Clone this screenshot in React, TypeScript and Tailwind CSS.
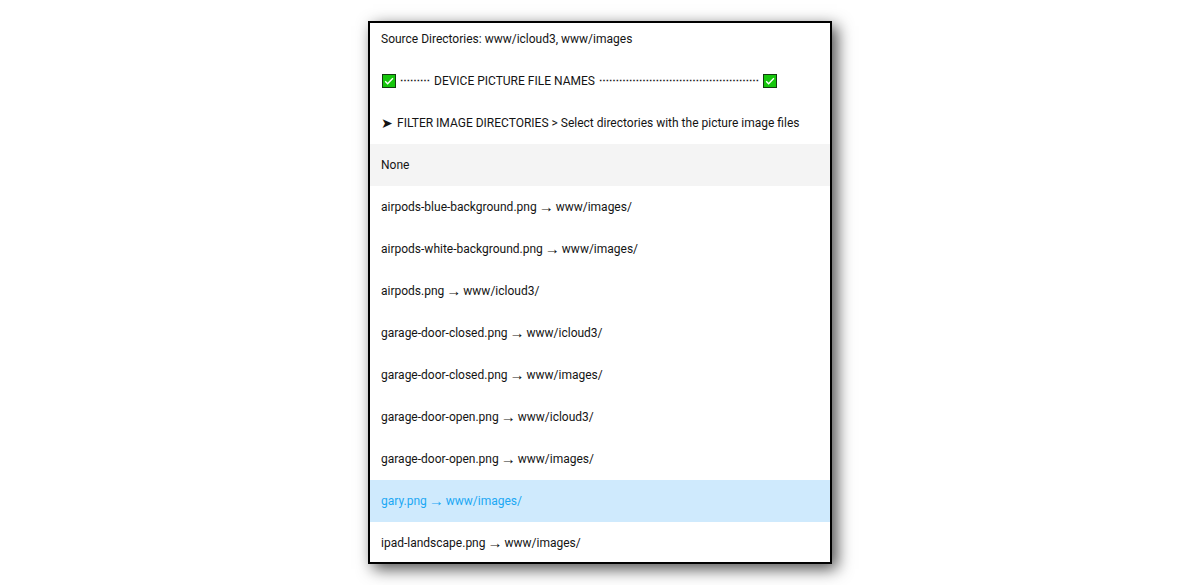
import { useState } from "react";

const files = [
  ["airpods-blue-background.png", "www/images/"],
  ["airpods-white-background.png", "www/images/"],
  ["airpods.png", "www/icloud3/"],
  ["garage-door-closed.png", "www/icloud3/"],
  ["garage-door-closed.png", "www/images/"],
  ["garage-door-open.png", "www/icloud3/"],
  ["garage-door-open.png", "www/images/"],
  ["gary.png", "www/images/"],
  ["ipad-landscape.png", "www/images/"],
];

function CheckIcon() {
  return (
    <svg viewBox="0 0 14 14" className="h-3.5 w-3.5 shrink-0" aria-hidden="true">
      <rect x="0.5" y="0.5" width="13" height="13" fill="#16c60c" stroke="#123d10" />
      <path d="M3.2 7.3 5.6 9.7 10.9 4.2" fill="none" stroke="#fff" strokeWidth="1.4" />
    </svg>
  );
}

function Dots({ count }: { count: number }) {
  return <span className="text-[10px] font-bold">{"⋯".repeat(count)}</span>;
}

const row = "flex w-full items-center px-[11px] text-left whitespace-pre";

export default function App() {
  const [selected, setSelected] = useState(7);
  return (
    <main className="flex min-h-screen items-start justify-center bg-white pt-[21px] font-['Roboto','Liberation_Sans',sans-serif] text-[12px] leading-5 text-[#141414]">
      <div
        role="listbox"
        aria-label="Device picture file names"
        className="w-full max-w-[464px] border-2 border-black bg-white shadow-[5px_5px_15px_rgba(0,0,0,0.7)]"
      >
        <button role="option" aria-selected={false} className={`${row} h-[37px] pb-[5px]`}>
          Source Directories: www/icloud3, www/images
        </button>
        <button role="option" aria-selected={false} className={`${row} h-[42px] gap-1 pl-3`}>
          <CheckIcon />
          <Dots count={3} />
          <span>DEVICE PICTURE FILE NAMES</span>
          <Dots count={16} />
          <CheckIcon />
        </button>
        <button role="option" aria-selected={false} className={`${row} h-[42px] gap-1`}>
          <span className="text-[14px]">➤</span>
          <span>FILTER IMAGE DIRECTORIES &gt; Select directories with the picture image files</span>
        </button>
        <button role="option" aria-selected={false} className={`${row} h-[42px] bg-[#f4f4f4]`}>
          None
        </button>
        {files.map(([name, dir], i) => (
          <button
            key={i}
            role="option"
            aria-selected={i === selected}
            onClick={() => setSelected(i)}
            className={`${row} gap-0.5 ${i === files.length - 1 ? "h-10 pt-0.5" : "h-[42px]"} ${
              i === selected ? "bg-[#cfeafd] text-[#1ca8f4]" : ""
            }`}
          >
            <span>{name}</span>
            <span className="font-['Liberation_Serif',serif] text-[15px]">→</span>
            <span>{dir}</span>
          </button>
        ))}
      </div>
    </main>
  );
}
